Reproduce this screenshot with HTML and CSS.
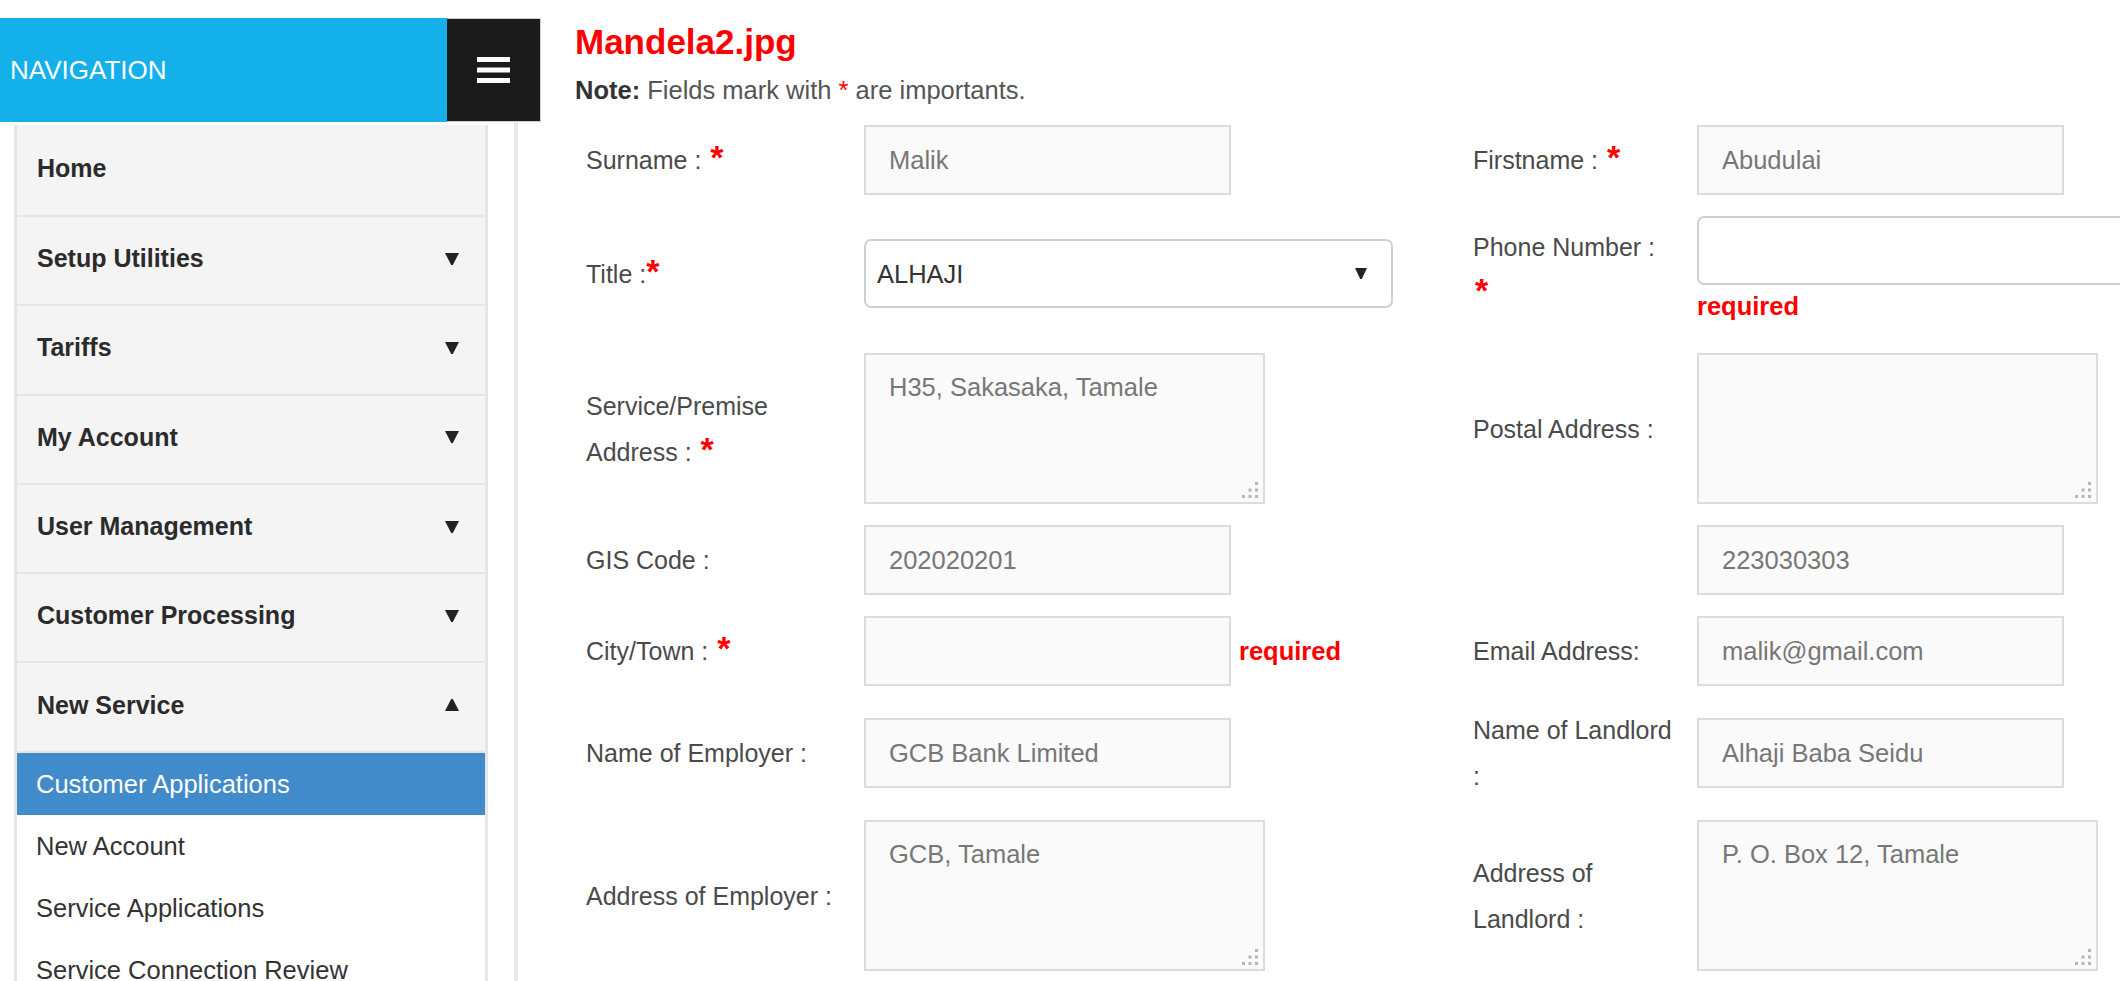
FILE: index.html
```html
<!DOCTYPE html>
<html lang="en">
<head>
<meta charset="utf-8">
<title>Customer Applications</title>
<link rel="stylesheet" href="styles.css">
</head>
<body>
<div class="page">
  <aside class="left">
    <header class="nav-head">
      <div class="nav-title">NAVIGATION</div>
      <button class="nav-toggle" type="button" aria-label="Toggle navigation">
        <svg width="33" height="26" viewBox="0 0 33 26"><rect x="0" y="0" width="33" height="5" fill="#fff"/><rect x="0" y="10.5" width="33" height="5" fill="#fff"/><rect x="0" y="21" width="33" height="5" fill="#fff"/></svg>
      </button>
    </header>
    <div class="side-body">
      <ul class="menu">
        <li class="menu-item first"><span>Home</span></li>
        <li class="menu-item"><span>Setup Utilities</span><svg class="caret" width="14" height="12" viewBox="0 0 14 12"><polygon points="0,0 14,0 7.8,12 6.2,12" fill="#222"/></svg></li>
        <li class="menu-item"><span>Tariffs</span><svg class="caret" width="14" height="12" viewBox="0 0 14 12"><polygon points="0,0 14,0 7.8,12 6.2,12" fill="#222"/></svg></li>
        <li class="menu-item"><span>My Account</span><svg class="caret" width="14" height="12" viewBox="0 0 14 12"><polygon points="0,0 14,0 7.8,12 6.2,12" fill="#222"/></svg></li>
        <li class="menu-item"><span>User Management</span><svg class="caret" width="14" height="12" viewBox="0 0 14 12"><polygon points="0,0 14,0 7.8,12 6.2,12" fill="#222"/></svg></li>
        <li class="menu-item"><span>Customer Processing</span><svg class="caret" width="14" height="12" viewBox="0 0 14 12"><polygon points="0,0 14,0 7.8,12 6.2,12" fill="#222"/></svg></li>
        <li class="menu-item open"><span>New Service</span><svg class="caret" width="14" height="12" viewBox="0 0 14 12"><polygon points="6.2,0 7.8,0 14,12 0,12" fill="#222"/></svg></li>
      </ul>
      <ul class="submenu">
        <li class="active">Customer Applications</li>
        <li>New Account</li>
        <li>Service Applications</li>
        <li>Service Connection Review</li>
      </ul>
    </div>
  </aside>

  <main class="content">
    <h1 class="file-title">Mandela2.jpg</h1>
    <p class="note"><b>Note:</b> Fields mark with <span class="star">*</span> are importants.</p>

    <form class="form">
      <div class="row">
        <div class="lbl l">Surname : <span class="req">*</span></div>
        <div><input class="field" type="text" value="Malik" readonly></div>
        <div class="lbl r">Firstname : <span class="req">*</span></div>
        <div><input class="field" type="text" value="Abudulai" readonly></div>
      </div>

      <div class="row row-title">
        <div class="lbl l">Title :<span class="req nomargin">*</span></div>
        <div class="select-wrap">
          <select class="select"><option>ALHAJI</option></select>
          <svg class="sel-caret" width="12" height="11" viewBox="0 0 12 11"><polygon points="0,0 12,0 6.8,11 5.2,11" fill="#222"/></svg>
        </div>
        <div class="lbl r">Phone Number : <span class="req">*</span></div>
        <div class="phone-cell">
          <input class="phone" type="text" value="">
          <div class="error">required</div>
        </div>
      </div>

      <div class="row">
        <div class="lbl l">Service/Premise Address : <span class="req">*</span></div>
        <div class="area-wrap">
          <textarea class="area" readonly>H35, Sakasaka, Tamale</textarea>
          <svg class="grip" width="16" height="16" viewBox="0 0 16 16"><rect x="13" y="0" width="3" height="3"/><rect x="6.5" y="6.5" width="3" height="3"/><rect x="13" y="6.5" width="3" height="3"/><rect x="0" y="13" width="3" height="3"/><rect x="6.5" y="13" width="3" height="3"/><rect x="13" y="13" width="3" height="3"/></svg>
        </div>
        <div class="lbl r">Postal Address :</div>
        <div class="area-wrap">
          <textarea class="area" readonly></textarea>
          <svg class="grip" width="16" height="16" viewBox="0 0 16 16"><rect x="13" y="0" width="3" height="3"/><rect x="6.5" y="6.5" width="3" height="3"/><rect x="13" y="6.5" width="3" height="3"/><rect x="0" y="13" width="3" height="3"/><rect x="6.5" y="13" width="3" height="3"/><rect x="13" y="13" width="3" height="3"/></svg>
        </div>
      </div>

      <div class="row">
        <div class="lbl l">GIS Code :</div>
        <div><input class="field" type="text" value="202020201" readonly></div>
        <div class="lbl r"></div>
        <div><input class="field" type="text" value="223030303" readonly></div>
      </div>

      <div class="row">
        <div class="lbl l">City/Town : <span class="req">*</span></div>
        <div class="with-error">
          <input class="field" type="text" value="" readonly>
          <span class="error">required</span>
        </div>
        <div class="lbl r">Email Address:</div>
        <div><input class="field" type="text" value="malik@gmail.com" readonly></div>
      </div>

      <div class="row">
        <div class="lbl l">Name of Employer :</div>
        <div><input class="field" type="text" value="GCB Bank Limited" readonly></div>
        <div class="lbl r">Name of Landlord :</div>
        <div><input class="field" type="text" value="Alhaji Baba Seidu" readonly></div>
      </div>

      <div class="row">
        <div class="lbl l">Address of Employer :</div>
        <div class="area-wrap">
          <textarea class="area" readonly>GCB, Tamale</textarea>
          <svg class="grip" width="16" height="16" viewBox="0 0 16 16"><rect x="13" y="0" width="3" height="3"/><rect x="6.5" y="6.5" width="3" height="3"/><rect x="13" y="6.5" width="3" height="3"/><rect x="0" y="13" width="3" height="3"/><rect x="6.5" y="13" width="3" height="3"/><rect x="13" y="13" width="3" height="3"/></svg>
        </div>
        <div class="lbl r">Address of Landlord :</div>
        <div class="area-wrap">
          <textarea class="area" readonly>P. O. Box 12, Tamale</textarea>
          <svg class="grip" width="16" height="16" viewBox="0 0 16 16"><rect x="13" y="0" width="3" height="3"/><rect x="6.5" y="6.5" width="3" height="3"/><rect x="13" y="6.5" width="3" height="3"/><rect x="0" y="13" width="3" height="3"/><rect x="6.5" y="13" width="3" height="3"/><rect x="13" y="13" width="3" height="3"/></svg>
        </div>
      </div>
    </form>
  </main>
</div>
</body>
</html>
```

FILE: styles.css
```css
* { box-sizing: border-box; }

html, body {
  margin: 0;
  height: 100%;
  overflow: hidden;
  background: #fff;
}

body {
  font-family: "Liberation Sans", Arial, sans-serif;
  color: #333;
}

.page {
  display: flex;
  height: 100%;
}

/* ---------- left navigation ---------- */
.left {
  width: 541px;
  flex: none;
  display: flex;
  flex-direction: column;
}

.nav-head {
  display: flex;
  height: 104px;
  margin-top: 18px;
  flex: none;
}

.nav-title {
  width: 447px;
  background: #13b0e9;
  color: #fff;
  font-size: 26px;
  display: flex;
  align-items: center;
  padding-left: 10px;
}

.nav-toggle {
  width: 94px;
  margin: 0;
  padding: 0;
  background: #1b1b1b;
  border: 1px solid #cfcfcf;
  border-left: 0;
  display: flex;
  align-items: center;
  justify-content: center;
}

.side-body {
  flex: 1;
  width: 518px;
  border-right: 4px solid #e9e9e9;
  padding: 3px 0 0 14px;
}

.menu,
.submenu {
  list-style: none;
  margin: 0;
  padding: 0;
  width: 474px;
  border-left: 3px solid #e6e6e6;
  border-right: 3px solid #e6e6e6;
}

.menu-item {
  height: 89.3px;
  display: flex;
  align-items: center;
  justify-content: space-between;
  padding: 0 26px 4px 20px;
  background: #f4f4f4;
  border-bottom: 2px solid #e6e6e6;
  font-weight: bold;
  font-size: 25px;
  color: #2b2b2b;
}

.menu-item.first { height: 92px; }

.caret { flex: none; }

.submenu li {
  height: 62px;
  line-height: 62px;
  padding-left: 19px;
  font-size: 25.5px;
  color: #333;
}

.submenu li.active {
  background: #428bca;
  color: #fff;
}

/* ---------- content ---------- */
.content {
  flex: 1;
  min-width: 0;
  padding: 22px 0 0 34px;
}

.file-title {
  margin: 0;
  font-size: 35px;
  line-height: 40px;
  font-weight: bold;
  color: #ff0000;
}

.note {
  margin: 13px 0 0;
  font-size: 25.5px;
  line-height: 30px;
  color: #555;
}

.note b { color: #333; }
.note .star { color: #f00; }

.form {
  margin-top: 20px;
  padding-left: 11px;
  display: flex;
  flex-direction: column;
  gap: 21px;
}

.row {
  display: grid;
  grid-template-columns: 278px 609px 224px minmax(0, 1fr);
  align-items: center;
}

.lbl {
  font-size: 25px;
  line-height: 46px;
  color: #4a4a4a;
  padding-right: 27px;
}

.lbl.r { padding-right: 24px; }

.req {
  color: #f00;
  font-weight: bold;
  font-size: 34px;
  line-height: 1;
  margin-left: 2px;
}

.req.nomargin { margin-left: 0; }

.field {
  display: block;
  width: 367px;
  height: 70px;
  margin: 0;
  border: 2px solid #dcdcdc;
  border-radius: 0;
  background: #fafafa;
  font-family: inherit;
  font-size: 25.5px;
  color: #777;
  padding: 0 23px;
  outline: none;
}

.area-wrap {
  position: relative;
  width: 401px;
  height: 151px;
}

.area {
  display: block;
  width: 100%;
  height: 100%;
  margin: 0;
  resize: none;
  border: 2px solid #dcdcdc;
  background: #fafafa;
  font-family: inherit;
  font-size: 25.5px;
  line-height: 30px;
  color: #777;
  padding: 17px 23px;
  outline: none;
  overflow: hidden;
}

.grip {
  position: absolute;
  right: 7px;
  bottom: 6px;
  fill: #b5b5b5;
}

.select-wrap {
  position: relative;
  width: 529px;
  height: 69px;
}

.select {
  appearance: none;
  -webkit-appearance: none;
  width: 100%;
  height: 100%;
  margin: 0;
  border: 2px solid #d0d0d0;
  border-radius: 7px;
  background: #fff;
  font-family: inherit;
  font-size: 25.5px;
  color: #333;
  padding: 0 0 0 11px;
  outline: none;
}

.sel-caret {
  position: absolute;
  right: 26px;
  top: 29px;
  pointer-events: none;
}

.phone {
  display: block;
  width: 529px;
  height: 69px;
  margin: 0;
  border: 2px solid #d0d0d0;
  border-radius: 7px;
  background: #fff;
  font-family: inherit;
  font-size: 25.5px;
  outline: none;
}

.error {
  color: #f00;
  font-weight: bold;
  font-size: 25.5px;
  line-height: 30px;
}

.with-error {
  display: flex;
  align-items: center;
  gap: 8px;
}

.row-title {
  align-items: start;
  min-height: 116px;
}

.row-title .lbl.l { margin-top: 35px; }
.row-title .select-wrap { margin-top: 23px; }
.row-title .lbl.r { margin-top: 8px; }
.row-title .error { margin-top: 6px; }
```
